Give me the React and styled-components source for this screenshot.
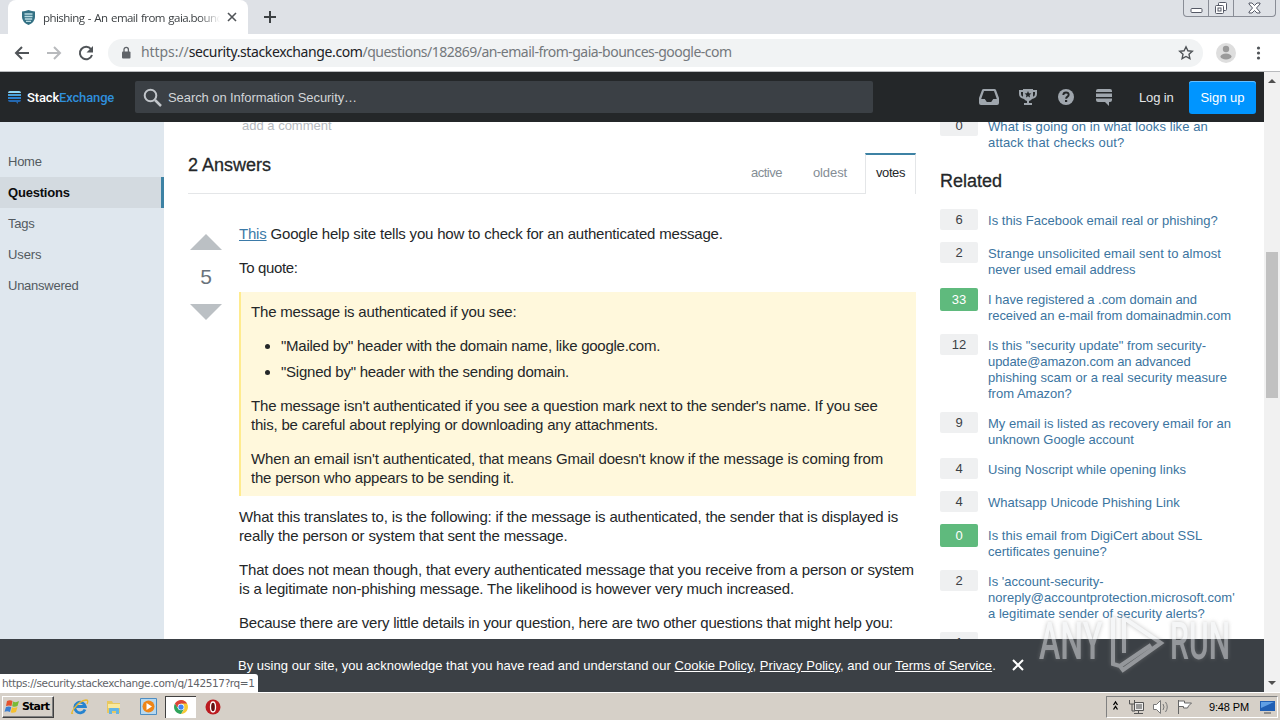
import styled, { createGlobalStyle } from "styled-components";

const GlobalStyle = createGlobalStyle`
  * {
    box-sizing: border-box;
  }
  body {
    margin: 0;
    overflow: hidden;
    font-family: "Liberation Sans", Arial, sans-serif;
    font-size: 13px;
    color: #242729;
    background: #fff;
  }
`;

const Screen = styled.div`
  width: 1280px;
  height: 720px;
  display: flex;
  flex-direction: column;
  overflow: hidden;
`;

/* each printed line keeps its own tracking */
const Line = styled.span`
  display: block;
  white-space: pre;
  letter-spacing: ${(props) => props.$ls || 0}px;
`;

const TabStrip = styled.div`
  height: 34px;
  background: #dee1e6;
  display: flex;
  align-items: flex-start;
  flex: none;
`;

const Tab = styled.div`
  width: 240px;
  height: 34px;
  margin-left: 8px;
  padding: 0 11px 0 13px;
  border-radius: 8px 8px 0 0;
  background: #fff;
  display: flex;
  align-items: center;
  gap: 7px;
  font-family: "Open Sans", "Noto Sans", sans-serif;
  font-size: 11.5px;
  color: #3c4043;
`;

const TabTitle = styled.div`
  width: 177px;
  overflow: hidden;
  white-space: nowrap;
  letter-spacing: -0.55px;
  word-spacing: 1px;
  mask-image: linear-gradient(90deg, #000 88%, transparent);
`;

const NewTab = styled.div`
  padding: 10px 0 0 15px;
  line-height: 0;
`;

const WindowButtons = styled.div`
  display: flex;
  width: 93px;
  height: 17px;
  margin: 0 4px 0 auto;
  border: 1px solid #898d96;
  border-top: 0;
  border-radius: 0 0 4px 4px;
`;

const WindowButton = styled.div`
  flex: ${(props) => props.$grow || 25};
  display: flex;
  align-items: center;
  justify-content: center;
  border-right: ${(props) => (props.$last ? "0" : "1px solid #898d96")};
`;

const AddressBar = styled.div`
  height: 38px;
  flex: none;
  display: flex;
  align-items: center;
  background: #fff;
  border-bottom: 1px solid #b8babd;
  padding: 0 13px 0 14px;
`;

const NavIcons = styled.div`
  display: flex;
  gap: 16px;
  margin-right: 14px;
`;

const Omnibox = styled.div`
  width: 1095px;
  height: 28px;
  border-radius: 14px;
  background: #f1f3f4;
  display: flex;
  align-items: center;
  padding: 0 9px 0 13px;
  font-family: "Noto Sans", sans-serif;
  font-size: 14px;
  color: #74787c;
  svg:last-child {
    margin-left: auto;
  }
`;

const Url = styled.div`
  margin: -2px 0 0 10px;
  white-space: nowrap;
  letter-spacing: -0.51px;
  i {
    font-style: normal;
    letter-spacing: -0.07px;
  }
  b {
    font-weight: 400;
    color: #202124;
    letter-spacing: -0.38px;
  }
`;

const Avatar = styled.div`
  margin-left: 13px;
  width: 20px;
  height: 20px;
`;

const Dots = styled.div`
  margin-left: auto;
  height: 20px;
  width: 18px;
`;

const Viewport = styled.div`
  flex: 1;
  min-height: 0;
  display: flex;
`;

const Page = styled.div`
  position: relative;
  width: 1264px;
  display: flex;
  flex-direction: column;
  overflow: hidden;
`;

const Scrollbar = styled.div`
  width: 16px;
  background: #f1f1f1;
  display: flex;
  flex-direction: column;
  align-items: center;
  padding: 7px 0;
`;

const Thumb = styled.div`
  width: 12px;
  height: 146px;
  margin: 169px 0 auto;
  background: #c1c1c1;
`;

const Arrow = styled.div`
  border: 4px solid transparent;
  border-top-width: ${(props) => (props.$up ? 0 : 4)}px;
  border-bottom-width: ${(props) => (props.$up ? 4 : 0)}px;
  border-${(props) => (props.$up ? "bottom" : "top")}-color: #505050;
`;

const TopBar = styled.header`
  height: 50px;
  flex: none;
  background: #242729;
  display: flex;
  align-items: center;
  padding: 0 8px;
  z-index: 1;
`;

const Logo = styled.div`
  display: flex;
  align-items: center;
  width: 127px;
  gap: 6px;
  font-family: Roboto, sans-serif;
  font-size: 13px;
  font-weight: 500;
  color: #fff;
  letter-spacing: -0.15px;
  b {
    font-weight: 500;
    color: #2f8fdc;
  }
`;

const Search = styled.div`
  width: 738px;
  height: 32px;
  border-radius: 2px;
  background: #3b4045;
  display: flex;
  align-items: center;
  gap: 6px;
  padding-left: 8px;
  color: #d2d5d8;
`;

const TopIcons = styled.div`
  display: flex;
  align-items: center;
  gap: 20px;
  margin-left: 106px;
  color: #9fa6ad;
`;

const Login = styled.a`
  margin-left: 27px;
  color: #e4e6e8;
`;

const SignUp = styled.button`
  width: 67px;
  height: 33px;
  padding: 0;
  margin-left: auto;
  border: 0;
  border-radius: 3px;
  background: #0095ff;
  box-shadow: inset 0 1px #66bfff;
  color: #fff;
  font: inherit;
  font-size: 13px;
`;

const Body = styled.div`
  flex: 1;
  display: flex;
  min-height: 0;
  overflow: hidden;
`;

const Sidebar = styled.nav`
  width: 164px;
  flex: none;
  padding-top: 24px;
  background: #dfe7ee;
`;

const NavItem = styled.a`
  display: flex;
  align-items: center;
  height: 31px;
  padding-left: 8px;
  color: ${(props) => (props.$active ? "#0c0d0e" : "#535a60")};
  font-weight: ${(props) => (props.$active ? 700 : 400)};
  background: ${(props) => (props.$active ? "#d3dae0" : "none")};
  border-right: ${(props) => (props.$active ? "3px solid #3d82a4" : "0")};
`;

const Main = styled.main`
  width: 728px;
  margin-left: 24px;
  flex: none;
`;

const AddComment = styled.div`
  height: 31px;
  padding-left: 54px;
  line-height: 8px;
  color: #b6babf;
`;

const AnswersHead = styled.div`
  display: flex;
  height: 41px;
  border-bottom: 1px solid #e4e6e8;
`;

const AnswersTitle = styled.h2`
  margin: 0 auto 0 0;
  font-size: 18px;
  font-weight: 400;
  line-height: 24px;
  -webkit-text-stroke: 0.3px;
`;

const SortTab = styled.a`
  width: ${(props) => props.$w}px;
  height: 41px;
  display: flex;
  justify-content: center;
  padding-top: ${(props) => (props.$active ? 0 : 2)}px;
  line-height: 36px;
  border: solid #e4e6e8;
  border-width: ${(props) => (props.$active ? "2px 1px 0" : "0")};
  border-top-color: #3d82a4;
  background: ${(props) => (props.$active ? "#fff" : "none")};
  color: ${(props) => (props.$active ? "#242729" : "#848d95")};
`;

const Answer = styled.div`
  display: flex;
  padding-top: 30px;
`;

const Votes = styled.div`
  width: 36px;
  flex: none;
  display: flex;
  flex-direction: column;
  align-items: center;
  padding-top: 10px;
  margin-right: 15px;
  font-size: 21px;
  line-height: 24px;
  color: #6a737c;
`;

const VoteArrow = styled.div`
  border: 16px solid transparent;
  border-top: ${(props) => (props.$up ? "0" : "16px solid #bbc0c4")};
  border-bottom: ${(props) => (props.$up ? "16px solid #bbc0c4" : "0")};
`;

const VoteCount = styled.div`
  margin: 15px 0;
`;

const Post = styled.div`
  width: 677px;
  font-size: 15px;
  line-height: 19px;
`;

const P = styled.div`
  margin-bottom: 15px;
`;

const Quote = styled.blockquote`
  margin: 0 0 11px;
  height: 204px;
  padding: 10px 8px 0 10px;
  background: #fff8dc;
  border-left: 2px solid #ffeb8e;
`;

const List = styled.ul`
  margin: 0 0 15px 30px;
  padding: 0;
`;

const ListItem = styled.li`
  margin-bottom: 7px;
`;

const InlineLink = styled.a`
  color: #3b7aa8;
  text-decoration: underline;
`;

const Aside = styled.aside`
  width: 300px;
  margin-left: 24px;
  flex: none;
`;

const AsideTitle = styled.h4`
  margin: 22px 0 16px;
  font-size: 18px;
  line-height: 24px;
  font-weight: 400;
  -webkit-text-stroke: 0.3px;
`;

const Related = styled.div`
  display: flex;
  gap: 10px;
  min-height: 19px;
  margin-top: ${(props) => (props.$scrolled ? -7 : 0)}px;
  margin-bottom: 14px;
  line-height: 16px;
  color: #3b74a0;
`;

const Score = styled.div`
  width: 38px;
  height: ${(props) => (props.$accepted ? 23 : 21)}px;
  margin-bottom: -7px;
  border-radius: 2px;
  text-align: center;
  line-height: ${(props) => (props.$accepted ? 23 : 21)}px;
  background: ${(props) => (props.$accepted ? "#5fba7d" : "#eff0f1")};
  color: ${(props) => (props.$accepted ? "#fff" : "#3b4045")};
  flex: none;
`;

const RelatedText = styled.div`
  padding-top: 4px;
  margin-bottom: -4px;
`;

const CookieBar = styled.div`
  position: absolute;
  left: 0;
  right: 0;
  bottom: 0;
  height: 53px;
  background: #3b4045;
  color: #fff;
  display: flex;
  align-items: center;
  padding-left: 238px;
  gap: 15px;
`;

const StatusBubble = styled.div`
  position: absolute;
  left: 0;
  bottom: 0;
  width: 258px;
  height: 18px;
  padding-left: 2px;
  line-height: 18px;
  background: #fff;
  border-radius: 0 3px 0 0;
  font-family: "DejaVu Sans", sans-serif;
  font-size: 10.5px;
  color: #5f6368;
`;

const Watermark = styled.div`
  position: absolute;
  left: 1039px;
  top: 611px;
  display: flex;
  align-items: center;
  height: 62px;
  opacity: 0.5;
  filter: drop-shadow(0 0 2px #888);
`;

const WatermarkText = styled.span`
  width: ${(props) => props.$w}px;
  color: #eceef0;
  font-family: Roboto, sans-serif;
  font-size: 51px;
  font-weight: 500;
  line-height: 62px;
  transform: scaleX(${(props) => props.$sx});
  transform-origin: left;
`;

const Taskbar = styled.footer`
  height: 28px;
  flex: none;
  display: flex;
  align-items: center;
  background: #d6d0c8;
  border-top: 1px solid #fff;
  padding: 0 2px;
`;

const StartButton = styled.div`
  width: 52px;
  height: 22px;
  display: flex;
  align-items: center;
  gap: 1px;
  padding-left: 1px;
  margin-right: 9px;
  border: 1px solid;
  border-color: #fff #404040 #404040 #fff;
  box-shadow: inset -1px -1px #808080;
  font-family: "DejaVu Sans", sans-serif;
  font-size: 11px;
  font-weight: 700;
  color: #000;
  letter-spacing: -0.8px;
`;

const TaskIcon = styled.div`
  display: flex;
  align-items: center;
  justify-content: center;
  width: ${(props) => (props.$active ? 31 : 34)}px;
  height: 22px;
  background: ${(props) => (props.$active ? "#fff" : "none")};
  box-shadow: ${(props) => (props.$active ? "inset 1px 1px #404040" : "none")};
`;

const Tray = styled.div`
  margin-left: auto;
  width: 172px;
  height: 22px;
  display: flex;
  align-items: center;
  padding: 0 1px 0 5px;
  border: 1px solid;
  border-color: #808080 #fff #fff #808080;
  font-size: 11px;
  color: #000;
`;

const Clock = styled.span`
  margin: 0 auto 0 17px;
  white-space: nowrap;
  letter-spacing: -0.15px;
`;

const ShieldIcon = () => (
  <svg width="15" height="16" viewBox="0 0 15 16">
    <path d="M7.500 1Q11 2 14 2.500V8q0 5-6.500 8Q1 13 1 8V2.500Q4 2 7.500 1z" fill="#347184" />
    <path d="M3.500 5h8M3.500 7.500h8M3.800 10h7.400M5 12.300h5" stroke="#b9dce2" strokeWidth="1.300" />
  </svg>
);

const BackIcon = ({ color, flip }) => (
  <svg width="16" height="16" viewBox="0 0 16 16" transform={flip ? "scale(-1 1)" : undefined}>
    <path d="M15 8H2.500M8 2L2 8l6 6" fill="none" stroke={color} strokeWidth="2" />
  </svg>
);

const ReloadIcon = () => (
  <svg width="16" height="16" viewBox="0 0 16 16">
    <path d="M13 4.200A6.200 6.200 0 1 0 14 10" fill="none" stroke="#505458" strokeWidth="2" />
    <path d="M15 1v6.500H8.500z" fill="#505458" />
  </svg>
);

const LockIcon = () => (
  <svg width="10" height="14" viewBox="0 0 10 14">
    <rect x="1" y="5.500" width="8.500" height="7" rx="1" fill="#5f6368" />
    <path d="M3 6V3.500a2.200 2.200 0 0 1 4.400 0V6" fill="none" stroke="#5f6368" strokeWidth="1.300" />
  </svg>
);

const StarIcon = () => (
  <svg width="16" height="16" viewBox="0 0 16 16">
    <path d="M8 1.800l1.900 4 4.400.5-3.300 3 .9 4.400L8 11.500l-3.900 2.200.9-4.400-3.300-3 4.400-.5z" fill="none" stroke="#505458" strokeWidth="1.400" />
  </svg>
);

const StackLogo = () => (
  <svg width="13" height="17" viewBox="0 0 13 17">
    <path d="M0 4q0-2 2-2h9q2 0 2 2z" fill="#8fd8f7" />
    <path d="M0 5h13v2H0z" fill="#48a2da" />
    <path d="M0 8h13v2H0z" fill="#2b82cf" />
    <path d="M0 11h13q0 2-2 2h-1v2l-2-2H2q-2 0-2-2z" fill="#2468b0" />
  </svg>
);

const SearchIcon = () => (
  <svg width="19" height="19" viewBox="0 0 19 19">
    <circle cx="7.500" cy="7.500" r="5.800" fill="none" stroke="#c1c5ca" strokeWidth="2" />
    <path d="M12 12l6 6" stroke="#c1c5ca" strokeWidth="2.500" />
  </svg>
);

const InboxIcon = () => (
  <svg width="20" height="18" viewBox="0 0 20 18">
    <path fillRule="evenodd" fill="currentColor" d="M4.600 1h10.800q1.200 0 1.600 1L20 10v5q0 2-2 2H2q-2 0-2-2v-5l3-8q.4-1 1.600-1zM5 3L2.200 11h3.600l2 3h4.400l2-3h3.600L15 3z" />
  </svg>
);

const TrophyIcon = () => (
  <svg width="18" height="18" viewBox="0 0 18 18">
    <path fillRule="evenodd" fill="currentColor" d="M4 1h10v1h4v4q0 4-5 5-1 1.500-3 2v2h3v2H5v-2h3v-2q-2-.5-3-2-5-1-5-5V2h4zM2 4v2q0 2 2 2.700V4zm12 0v4.700Q16 8 16 6V4zM9 3L8 5.200l-2.400.2 1.800 1.700L7 9.500l2-1.200 2 1.200-.4-2.400 1.800-1.700-2.400-.2z" />
  </svg>
);

const HelpIcon = () => (
  <svg width="18" height="18" viewBox="0 0 18 18">
    <circle cx="9" cy="9" r="8" fill="currentColor" />
    <path d="M6.300 7q.1-2.500 2.700-2.500t2.700 2.300c0 2-2.600 1.700-2.600 4" fill="none" stroke="#242729" strokeWidth="1.900" />
    <path d="M8 12h2.200v2H8z" fill="#242729" />
  </svg>
);

const SitesIcon = () => (
  <svg width="17" height="18" viewBox="0 0 17 18">
    <path fill="currentColor" d="M1 4V3q0-2 2-2h12q2 0 2 2v1zM1 5.500h16V9H1zM1 10.500h16V12q0 2-2 2h-1v4l-4-4H3q-2 0-2-2z" />
  </svg>
);

const IeIcon = () => (
  <svg width="18" height="18" viewBox="0 0 18 18">
    <path d="M14 11.500A5.300 5.300 0 1 1 14.300 8.500H5" fill="none" stroke="#2683cf" strokeWidth="2.800" />
    <path d="M2 15Q-1 17 3 10.500 9 2.500 15 2q3 0 1 4" fill="none" stroke="#e9b931" strokeWidth="1.300" />
  </svg>
);

const FolderIcon = () => (
  <svg width="18" height="18" viewBox="0 0 18 18">
    <path d="M2 3h5l1 2h7v10H2z" fill="#e8c860" />
    <path d="M3 6h12v4H3z" fill="#fae99c" />
    <path d="M4 16v-5q0-1 1-1h8q1 0 1 1v5h-3v-3H7v3z" fill="#63b4e4" />
  </svg>
);

const PlayerIcon = () => (
  <svg width="17" height="17" viewBox="0 0 17 17">
    <path d="M.5.500h16v16H.5z" fill="#b7d8ef" stroke="#4c8dc3" />
    <circle cx="8.500" cy="8.500" r="6" fill="#ee8518" />
    <path d="M6.500 5v7l5.500-3.500z" fill="#fff" />
  </svg>
);

const ChromeIcon = () => (
  <svg width="14" height="14" viewBox="0 0 16 16">
    <path d="M8 8V0a8 8 0 0 1 6.900 4A8 8 0 0 1 8 16l4-6z" fill="#f7c934" />
    <path d="M1.100 4A8 8 0 0 0 8 16l3.500-6H5z" fill="#2fa45b" />
    <path d="M1.100 4A8 8 0 0 1 14.900 4H8v4H3.400z" fill="#dc4437" />
    <circle cx="8" cy="8" r="3.800" fill="#fff" />
    <circle cx="8" cy="8" r="3" fill="#4285f4" />
  </svg>
);

const OperaIcon = () => (
  <svg width="16" height="16" viewBox="0 0 16 16">
    <circle cx="8" cy="8" r="7.500" fill="#bb1b20" />
    <ellipse cx="8" cy="8" rx="2.500" ry="5" fill="#641013" stroke="#fff" strokeWidth="1.300" />
  </svg>
);

const WindowsFlag = () => (
  <svg width="17" height="16" viewBox="0 0 17 16">
    <path d="M3 2q3-1.500 5.500 0L7.500 7Q5 6 2 7z" fill="#e5532d" />
    <path d="M9 2.500q3 1.500 6-.5l-1.500 5q-2.500 1.500-5.300.3z" fill="#7aba35" />
    <path d="M2 8q3-1.200 5.300 0L6 13q-2.500-1.500-5.500-.3z" fill="#3c7fd0" />
    <path d="M8 8.300q3 1.200 5.500-.3L12 13q-3 1.500-5.300.3z" fill="#f5c02f" />
  </svg>
);

const TrayIcons = () => (
  <svg width="80" height="18" viewBox="0 0 80 18" fill="none" stroke="#333">
    <path d="M1.500 7l2-3 2 3M1.500 11.500l2-3 2 3" stroke="#000" strokeWidth="1.300" />
    <path d="M22.500 4.500h9v8h-9zM22 15.500h9M26.500 13v2" fill="#eee" stroke="#555" />
    <path d="M24 6h6v5h-6z" fill="#999" stroke="none" />
    <path d="M17.500 2v4h5V2M20 6v7h3" stroke="#555" />
    <path d="M41.500 6.500h3l4-4v13l-4-4h-3z" fill="#fff" stroke="#777" />
    <path d="M51 6q2 3 0 6M53.500 4q3.500 5 0 10" stroke="#777" />
    <path d="M66.500 2v14M66.500 3h6v2h7l-3 3-1 2h-4V8.500h-5" fill="#fff" stroke="#666" />
  </svg>
);

const MonitorIcon = () => (
  <svg width="17" height="14" viewBox="0 0 17 14">
    <path d="M1 1h15v10H1z" fill="#1f5fb4" />
    <path d="M2 2h13L2 8z" fill="#5f9fe5" />
    <path d="M5 13h7" stroke="#777" strokeWidth="1.500" />
  </svg>
);

const linked = { score: 0, lines: [["What is going on in what looks like an", 0.08], ["attack that checks out?", 0.15]] };

const related = [
  { score: 6, lines: [["Is this Facebook email real or phishing?", 0.02]] },
  { score: 2, lines: [["Strange unsolicited email sent to almost", 0.08], ["never used email address", -0.06]] },
  { score: 33, accepted: true, lines: [["I have registered a .com domain and", -0.06], ["received an e-mail from domainadmin.com", -0.07]] },
  {
    score: 12,
    lines: [
      ['Is this "security update" from security-', 0.02],
      ["update@amazon.com an advanced", -0.1],
      ["phishing scam or a real security measure", 0.05],
      ["from Amazon?", 0],
    ],
  },
  { score: 9, lines: [["My email is listed as recovery email for an", 0.04], ["unknown Google account", -0.04]] },
  { score: 4, lines: [["Using Noscript while opening links", 0.02]] },
  { score: 4, lines: [["Whatsapp Unicode Phishing Link", 0.03]] },
  { score: 0, accepted: true, lines: [["Is this email from DigiCert about SSL", 0.03], ["certificates genuine?", -0.03]] },
  {
    score: 2,
    lines: [
      ["Is 'account-security-", 0.02],
      ["noreply@accountprotection.microsoft.com'", 0.03],
      ["a legitimate sender of security alerts?", 0.04],
    ],
  },
  { score: 1, lines: [["Email bounces with my address", 0.03]] },
];

const RelatedRow = ({ item, scrolled }) => (
  <Related $scrolled={scrolled}>
    <Score $accepted={item.accepted}>{item.score}</Score>
    <RelatedText>
      {item.lines.map(([text, ls]) => (
        <Line key={text} $ls={ls}>
          {text}
        </Line>
      ))}
    </RelatedText>
  </Related>
);

export default function App() {
  return (
    <Screen>
      <GlobalStyle />
      <TabStrip>
        <Tab>
          <ShieldIcon />
          <TabTitle>phishing - An email from gaia.bounces</TabTitle>
          <svg width="10" height="10" viewBox="0 0 10 10">
            <path d="M1 1l8 8M9 1L1 9" stroke="#505458" strokeWidth="1.600" />
          </svg>
        </Tab>
        <NewTab>
          <svg width="14" height="14" viewBox="0 0 14 14">
            <path d="M7 1v12M1 7h12" stroke="#3c4043" strokeWidth="2" />
          </svg>
        </NewTab>
        <WindowButtons>
          <WindowButton>
            <svg width="13" height="13" viewBox="0 0 13 13">
              <rect x="1" y="6.500" width="11" height="4" rx="1" fill="#fff" stroke="#555966" />
            </svg>
          </WindowButton>
          <WindowButton>
            <svg width="14" height="14" viewBox="0 0 14 14" fill="#fff" stroke="#555966">
              <rect x="4.500" y="1.500" width="8" height="8" rx="1" />
              <rect x="1.500" y="4.500" width="8" height="8" rx="1" />
              <rect x="4" y="7" width="3" height="3" />
            </svg>
          </WindowButton>
          <WindowButton $grow={42} $last>
            <svg width="13" height="12" viewBox="0 0 13 12">
              <path d="M1 1h3l2.500 2.500L9 1h3v1L8.500 6l3.500 4v1H9L6.500 8.500 4 11H1v-1l3.500-4L1 2z" fill="#fff" stroke="#555966" />
            </svg>
          </WindowButton>
        </WindowButtons>
      </TabStrip>

      <AddressBar>
        <NavIcons>
          <BackIcon color="#505458" />
          <BackIcon color="#b8babd" flip />
          <ReloadIcon />
        </NavIcons>
        <Omnibox>
          <LockIcon />
          <Url>
            <i>https://</i>
            <b>security.stackexchange.com</b>/questions/182869/an-email-from-gaia-bounces-google-com
          </Url>
          <StarIcon />
        </Omnibox>
        <Avatar>
          <svg width="20" height="20" viewBox="0 0 20 20">
            <circle cx="10" cy="10" r="10" fill="#dedede" />
            <circle cx="10" cy="6" r="3.200" fill="#9a9a9a" />
            <ellipse cx="10" cy="13.500" rx="5.500" ry="3" fill="#9a9a9a" />
          </svg>
        </Avatar>
        <Dots>
          <svg width="18" height="20" viewBox="0 0 18 20" fill="#505458">
            <circle cx="9.500" cy="5" r="1.600" />
            <circle cx="9.500" cy="10" r="1.600" />
            <circle cx="9.500" cy="15" r="1.600" />
          </svg>
        </Dots>
      </AddressBar>

      <Viewport>
        <Page>
          <TopBar>
            <Logo>
              <StackLogo />
              <span>
                Stack<b>Exchange</b>
              </span>
            </Logo>
            <Search>
              <SearchIcon />
              <Line $ls={-0.08}>Search on Information Security…</Line>
            </Search>
            <TopIcons>
              <InboxIcon />
              <TrophyIcon />
              <HelpIcon />
              <SitesIcon />
            </TopIcons>
            <Login>
              <Line $ls={-0.15}>Log in</Line>
            </Login>
            <SignUp>
              <Line $ls={0}>Sign up</Line>
            </SignUp>
          </TopBar>

          <Body>
            <Sidebar>
              <NavItem><Line $ls={-0.25}>Home</Line></NavItem>
              <NavItem $active><Line $ls={-0.2}>Questions</Line></NavItem>
              <NavItem><Line $ls={-0.2}>Tags</Line></NavItem>
              <NavItem><Line $ls={-0.1}>Users</Line></NavItem>
              <NavItem><Line $ls={-0.25}>Unanswered</Line></NavItem>
            </Sidebar>

            <Main>
              <AddComment>
                <Line $ls={0}>add a comment</Line>
              </AddComment>
              <AnswersHead>
                <AnswersTitle>2 Answers</AnswersTitle>
                <SortTab $w={61}><Line $ls={-0.5}>active</Line></SortTab>
                <SortTab $w={66}><Line $ls={-0.1}>oldest</Line></SortTab>
                <SortTab $w={51} $active style={{ marginLeft: 2 }}><Line $ls={-0.4}>votes</Line></SortTab>
              </AnswersHead>
              <Answer>
                <Votes>
                  <VoteArrow $up />
                  <VoteCount>5</VoteCount>
                  <VoteArrow />
                </Votes>
                <Post>
                  <P>
                    <Line $ls={-0.19}>
                      <InlineLink>This</InlineLink> Google help site tells you how to check for an authenticated message.
                    </Line>
                  </P>
                  <P>
                    <Line $ls={-0.35}>To quote:</Line>
                  </P>
                  <Quote>
                    <P>
                      <Line $ls={-0.18}>The message is authenticated if you see:</Line>
                    </P>
                    <List>
                      <ListItem><Line $ls={-0.25}>"Mailed by" header with the domain name, like google.com.</Line></ListItem>
                      <ListItem><Line $ls={-0.24}>"Signed by" header with the sending domain.</Line></ListItem>
                    </List>
                    <P>
                      <Line $ls={-0.185}>The message isn't authenticated if you see a question mark next to the sender's name. If you see</Line>
                      <Line $ls={-0.21}>this, be careful about replying or downloading any attachments.</Line>
                    </P>
                    <P>
                      <Line $ls={-0.14}>When an email isn't authenticated, that means Gmail doesn't know if the message is coming from</Line>
                      <Line $ls={-0.2}>the person who appears to be sending it.</Line>
                    </P>
                  </Quote>
                  <P>
                    <Line $ls={-0.16}>What this translates to, is the following: if the message is authenticated, the sender that is displayed is</Line>
                    <Line $ls={-0.15}>really the person or system that sent the message.</Line>
                  </P>
                  <P>
                    <Line $ls={-0.18}>That does not mean though, that every authenticated message that you receive from a person or system</Line>
                    <Line $ls={-0.18}>is a legitimate non-phishing message. The likelihood is however very much increased.</Line>
                  </P>
                  <P>
                    <Line $ls={-0.22}>Because there are very little details in your question, here are two other questions that might help you:</Line>
                  </P>
                </Post>
              </Answer>
            </Main>

            <Aside>
              <RelatedRow item={linked} scrolled />
              <AsideTitle>Related</AsideTitle>
              {related.map((item) => (
                <RelatedRow key={item.lines[0][0]} item={item} />
              ))}
            </Aside>
          </Body>

          <CookieBar>
            <Line $ls={0.02}>
              By using our site, you acknowledge that you have read and understand our <u>Cookie Policy</u>, <u>Privacy Policy</u>, and our <u>Terms of Service</u>.
            </Line>
            <svg width="14" height="14" viewBox="0 0 14 14">
              <path d="M2 1l10 10M12 1L2 11" stroke="#fff" strokeWidth="2" />
            </svg>
          </CookieBar>
          <StatusBubble>
            <Line $ls={-0.39}>https://security.stackexchange.com/q/142517?rq=1</Line>
          </StatusBubble>
        </Page>
        <Scrollbar>
          <Arrow $up />
          <Thumb />
          <Arrow />
        </Scrollbar>
      </Viewport>

      <Taskbar>
        <StartButton>
          <WindowsFlag />
          Start
        </StartButton>
        <TaskIcon><IeIcon /></TaskIcon>
        <TaskIcon><FolderIcon /></TaskIcon>
        <TaskIcon><PlayerIcon /></TaskIcon>
        <TaskIcon $active><ChromeIcon /></TaskIcon>
        <TaskIcon><OperaIcon /></TaskIcon>
        <Tray>
          <TrayIcons />
          <Clock>9:48 PM</Clock>
          <MonitorIcon />
        </Tray>
      </Taskbar>

      <Watermark>
        <WatermarkText $w={69} $sx={0.63}>ANY</WatermarkText>
        <svg width="62" height="62" viewBox="0 0 62 62" fill="none" stroke="#eceef0" strokeWidth="4">
          <path d="M16 42V7l37 25-38 27-3-4M5 6v47l7 2 31-21" />
        </svg>
        <WatermarkText $w={62} $sx={0.59}>RUN</WatermarkText>
      </Watermark>
    </Screen>
  );
}
